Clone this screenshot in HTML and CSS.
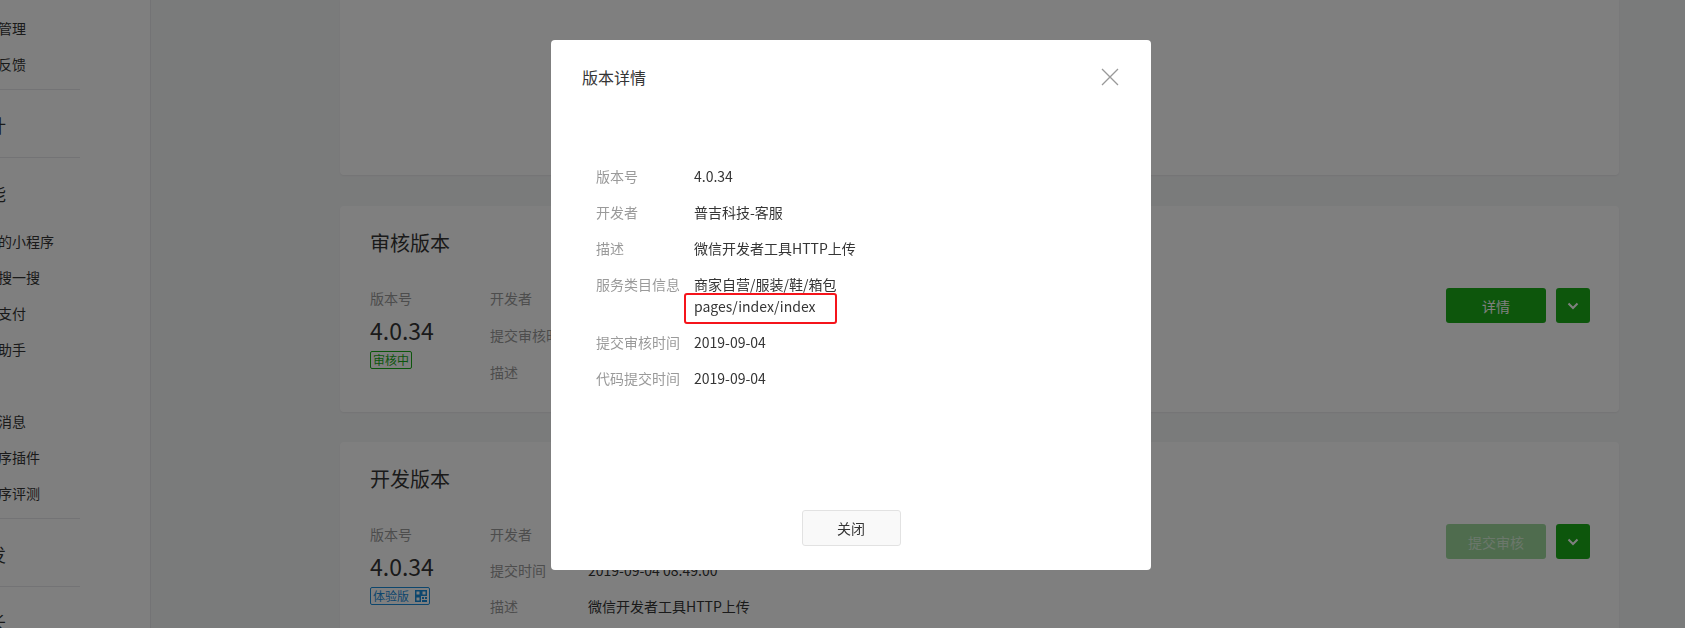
FILE: index.html
```html
<!DOCTYPE html>
<html lang="zh-CN">
<head>
    <meta charset="UTF-8">
    <meta name="viewport" content="width=device-width, initial-scale=1.0">
    <title>版本管理</title>
    <link rel="stylesheet" href="styles.css">
</head>
<body>

<div class="page">
    <aside class="sidebar">
        <div class="nav">
            <div class="nav-group">
                <a class="nav-item">成员管理</a>
                <a class="nav-item">版本管理</a>
                <a class="nav-item">用户反馈</a>
            </div>
            <div class="nav-group lone">
                <div class="nav-head">统计</div>
            </div>
            <div class="nav-group">
                <div class="nav-head">功能</div>
                <a class="nav-item">附近的小程序</a>
                <a class="nav-item">微信搜一搜</a>
                <a class="nav-item">微信支付</a>
                <a class="nav-item">物流助手</a>
                <a class="nav-item">客服</a>
                <a class="nav-item">订阅消息</a>
                <a class="nav-item">小程序插件</a>
                <a class="nav-item">小程序评测</a>
            </div>
            <div class="nav-group lone">
                <div class="nav-head">开发</div>
            </div>
            <div class="nav-group lone">
                <div class="nav-head">成长</div>
            </div>
        </div>
    </aside>

    <main class="main">
        <section class="card card-top"></section>

        <!-- 审核版本 -->
        <section class="card version">
            <div class="card-title">审核版本</div>
            <div class="card-body">
                <div class="ver-col">
                    <div class="ver-label">版本号</div>
                    <div class="ver-num">4.0.34</div>
                    <span class="badge badge-green">审核中</span>
                </div>
                <div class="meta">
                    <div class="meta-row">
                        <span class="meta-label">开发者</span>
                    </div>
                    <div class="meta-row">
                        <span class="meta-label">提交审核时间</span>
                    </div>
                    <div class="meta-row">
                        <span class="meta-label">描述</span>
                    </div>
                </div>
                <div class="actions">
                    <button class="btn">详情</button>
                    <button class="btn btn-drop">
                        <svg width="12" height="8" viewBox="0 0 12 8"><polyline points="1.5,1.5 6,6 10.5,1.5" fill="none" stroke="#fff" stroke-width="2"/></svg>
                    </button>
                </div>
            </div>
        </section>

        <!-- 开发版本 -->
        <section class="card version dev">
            <div class="card-title">开发版本</div>
            <div class="card-body">
                <div class="ver-col">
                    <div class="ver-label">版本号</div>
                    <div class="ver-num">4.0.34</div>
                    <span class="badge badge-blue">体验版
                        <svg width="12" height="12" viewBox="0 0 12 12">
                            <rect x="0.75" y="0.75" width="4.5" height="4.5" fill="none" stroke="currentColor" stroke-width="1.5"/>
                            <rect x="6.75" y="0.75" width="4.5" height="4.5" fill="none" stroke="currentColor" stroke-width="1.5"/>
                            <rect x="0.75" y="6.75" width="4.5" height="4.5" fill="none" stroke="currentColor" stroke-width="1.5"/>
                            <rect x="7" y="7" width="2" height="2" fill="currentColor"/>
                            <rect x="10" y="7" width="2" height="2" fill="currentColor"/>
                            <rect x="7" y="10" width="5" height="2" fill="currentColor"/>
                        </svg>
                    </span>
                </div>
                <div class="meta">
                    <div class="meta-row">
                        <span class="meta-label">开发者</span>
                    </div>
                    <div class="meta-row">
                        <span class="meta-label">提交时间</span>
                        <span class="meta-value">2019-09-04 08:49:00</span>
                    </div>
                    <div class="meta-row">
                        <span class="meta-label">描述</span>
                        <span class="meta-value">微信开发者工具HTTP上传</span>
                    </div>
                </div>
                <div class="actions">
                    <button class="btn btn-disabled">提交审核</button>
                    <button class="btn btn-drop">
                        <svg width="12" height="8" viewBox="0 0 12 8"><polyline points="1.5,1.5 6,6 10.5,1.5" fill="none" stroke="#fff" stroke-width="2"/></svg>
                    </button>
                </div>
            </div>
        </section>
    </main>
</div>

<!-- 版本详情弹窗 -->
<div class="mask">
    <div class="dialog">
        <div class="dialog-hd">
            <span class="dialog-title">版本详情</span>
            <svg class="dialog-close" width="18" height="18" viewBox="0 0 18 18">
                <path d="M1 1L17 17M17 1L1 17" stroke="#999" stroke-width="1.3" fill="none"/>
            </svg>
        </div>
        <div class="dialog-bd">
            <div class="detail-row">
                <span class="detail-label">版本号</span>
                <span class="detail-value">4.0.34</span>
            </div>
            <div class="detail-row">
                <span class="detail-label">开发者</span>
                <span class="detail-value">普吉科技-客服</span>
            </div>
            <div class="detail-row">
                <span class="detail-label">描述</span>
                <span class="detail-value">微信开发者工具HTTP上传</span>
            </div>
            <div class="detail-row">
                <span class="detail-label">服务类目信息</span>
                <span class="detail-value">
                    商家自营/服装/鞋/箱包<br>
                    <span class="mark">pages/index/index</span>
                </span>
            </div>
            <div class="detail-row">
                <span class="detail-label">提交审核时间</span>
                <span class="detail-value">2019-09-04</span>
            </div>
            <div class="detail-row">
                <span class="detail-label">代码提交时间</span>
                <span class="detail-value">2019-09-04</span>
            </div>
        </div>
        <div class="dialog-ft">
            <button class="btn-default">关闭</button>
        </div>
    </div>
</div>

</body>
</html>
```

FILE: styles.css
```css
/* Global */
body {
    margin: 0;
    font-family: "Noto Sans CJK SC", "Noto Sans", sans-serif;
    font-size: 14px;
    color: #353535;
    background-color: #f5f6f7;
}

.page {
    display: flex;
    height: 628px;
    overflow: hidden;
}

/* Sidebar */
.sidebar {
    width: 150px;
    flex-shrink: 0;
    background-color: #fff;
    border-right: 1px solid #e7e7eb;
    overflow: hidden;
}

.nav {
    width: 110px;
    margin-left: -30px;
    margin-top: -26px;
}

.nav-group {
    padding-bottom: 7px;
    border-bottom: 1px solid #e7e7eb;
}

.nav-group.lone {
    padding: 18px 0 15px;
}

.nav-head {
    font-size: 18px;
    line-height: 34px;
    color: #353535;
    white-space: nowrap;
}

.nav-group:not(.lone) .nav-head {
    padding-top: 18px;
    margin-bottom: 13px;
}

.nav-item {
    display: block;
    line-height: 36px;
    color: #353535;
    white-space: nowrap;
}

/* Main */
.main {
    flex: 1;
    padding: 0 66px 0 189px;
}

.card {
    background-color: #fff;
    border-radius: 4px;
    box-shadow: 0 1px 2px rgba(0, 0, 0, 0.06);
}

.card-top {
    height: 175px;
    border-radius: 0 0 4px 4px;
}

.version {
    margin-top: 31px;
    padding: 23px 29px 30px 30px;
}

.version.dev {
    margin-top: 30px;
}

.card-title {
    font-size: 20px;
    line-height: 28px;
}

.card-body {
    display: flex;
    align-items: flex-start;
    margin-top: 31px;
}

.ver-col {
    width: 120px;
}

.ver-label {
    line-height: 20px;
    color: #9a9a9a;
}

.ver-num {
    margin-top: 7px;
    font-size: 23px;
    line-height: 30px;
}

.badge {
    display: inline-flex;
    align-items: center;
    gap: 6px;
    margin-top: 6px;
    height: 16px;
    padding: 0 2px;
    font-size: 12px;
    line-height: 14px;
    border: 1px solid;
    border-radius: 2px;
}

.badge-green {
    color: #1aad19;
    border-color: #1aad19;
}

.badge-blue {
    color: #1a8ddb;
    border-color: #1a8ddb;
}

.meta {
    flex: 1;
}

.meta-row {
    display: flex;
    line-height: 20px;
}

.meta-row + .meta-row {
    margin-top: 17px;
}

.dev .meta-row + .meta-row {
    margin-top: 16px;
}

.meta-label {
    width: 98px;
    flex-shrink: 0;
    color: #9a9a9a;
    white-space: nowrap;
}

.actions {
    display: flex;
    gap: 10px;
}

.btn {
    width: 100px;
    height: 35px;
    border: none;
    border-radius: 3px;
    background-color: #1aad19;
    color: #fff;
    font-family: inherit;
    font-size: 14px;
    padding: 0;
}

.btn-drop {
    width: 34px;
    display: flex;
    align-items: center;
    justify-content: center;
}

.btn-disabled {
    background-color: #9ed99d;
    color: rgba(255, 255, 255, 0.6);
}

/* Dialog */
.mask {
    position: fixed;
    top: 0;
    left: 0;
    right: 0;
    bottom: 0;
    background-color: rgba(0, 0, 0, 0.5);
    display: flex;
    align-items: flex-start;
}

.dialog {
    margin: 40px 0 0 551px;
    width: 600px;
    height: 530px;
    background-color: #fff;
    border-radius: 4px;
    display: flex;
    flex-direction: column;
}

.dialog-hd {
    display: flex;
    justify-content: space-between;
    align-items: center;
    padding: 25px 32px 0 31px;
}

.dialog-title {
    font-size: 16px;
    line-height: 24px;
}

.dialog-bd {
    padding: 76px 0 0 45px;
}

.detail-row {
    display: flex;
    line-height: 22px;
}

.detail-row + .detail-row {
    margin-top: 14px;
}

.detail-label {
    width: 98px;
    flex-shrink: 0;
    color: #9a9a9a;
    white-space: nowrap;
}

.mark {
    position: relative;
}

.mark::after {
    content: '';
    position: absolute;
    left: -10px;
    top: -3px;
    width: 153px;
    height: 31px;
    box-sizing: border-box;
    border: 2px solid #f5141b;
    border-radius: 3px;
}

.dialog-ft {
    margin-top: auto;
    padding-bottom: 24px;
    text-align: center;
}

.btn-default {
    width: 99px;
    height: 36px;
    border: 1px solid #e2e2e2;
    border-radius: 3px;
    background-color: #f9f9f9;
    color: #353535;
    font-family: inherit;
    font-size: 14px;
}
```
